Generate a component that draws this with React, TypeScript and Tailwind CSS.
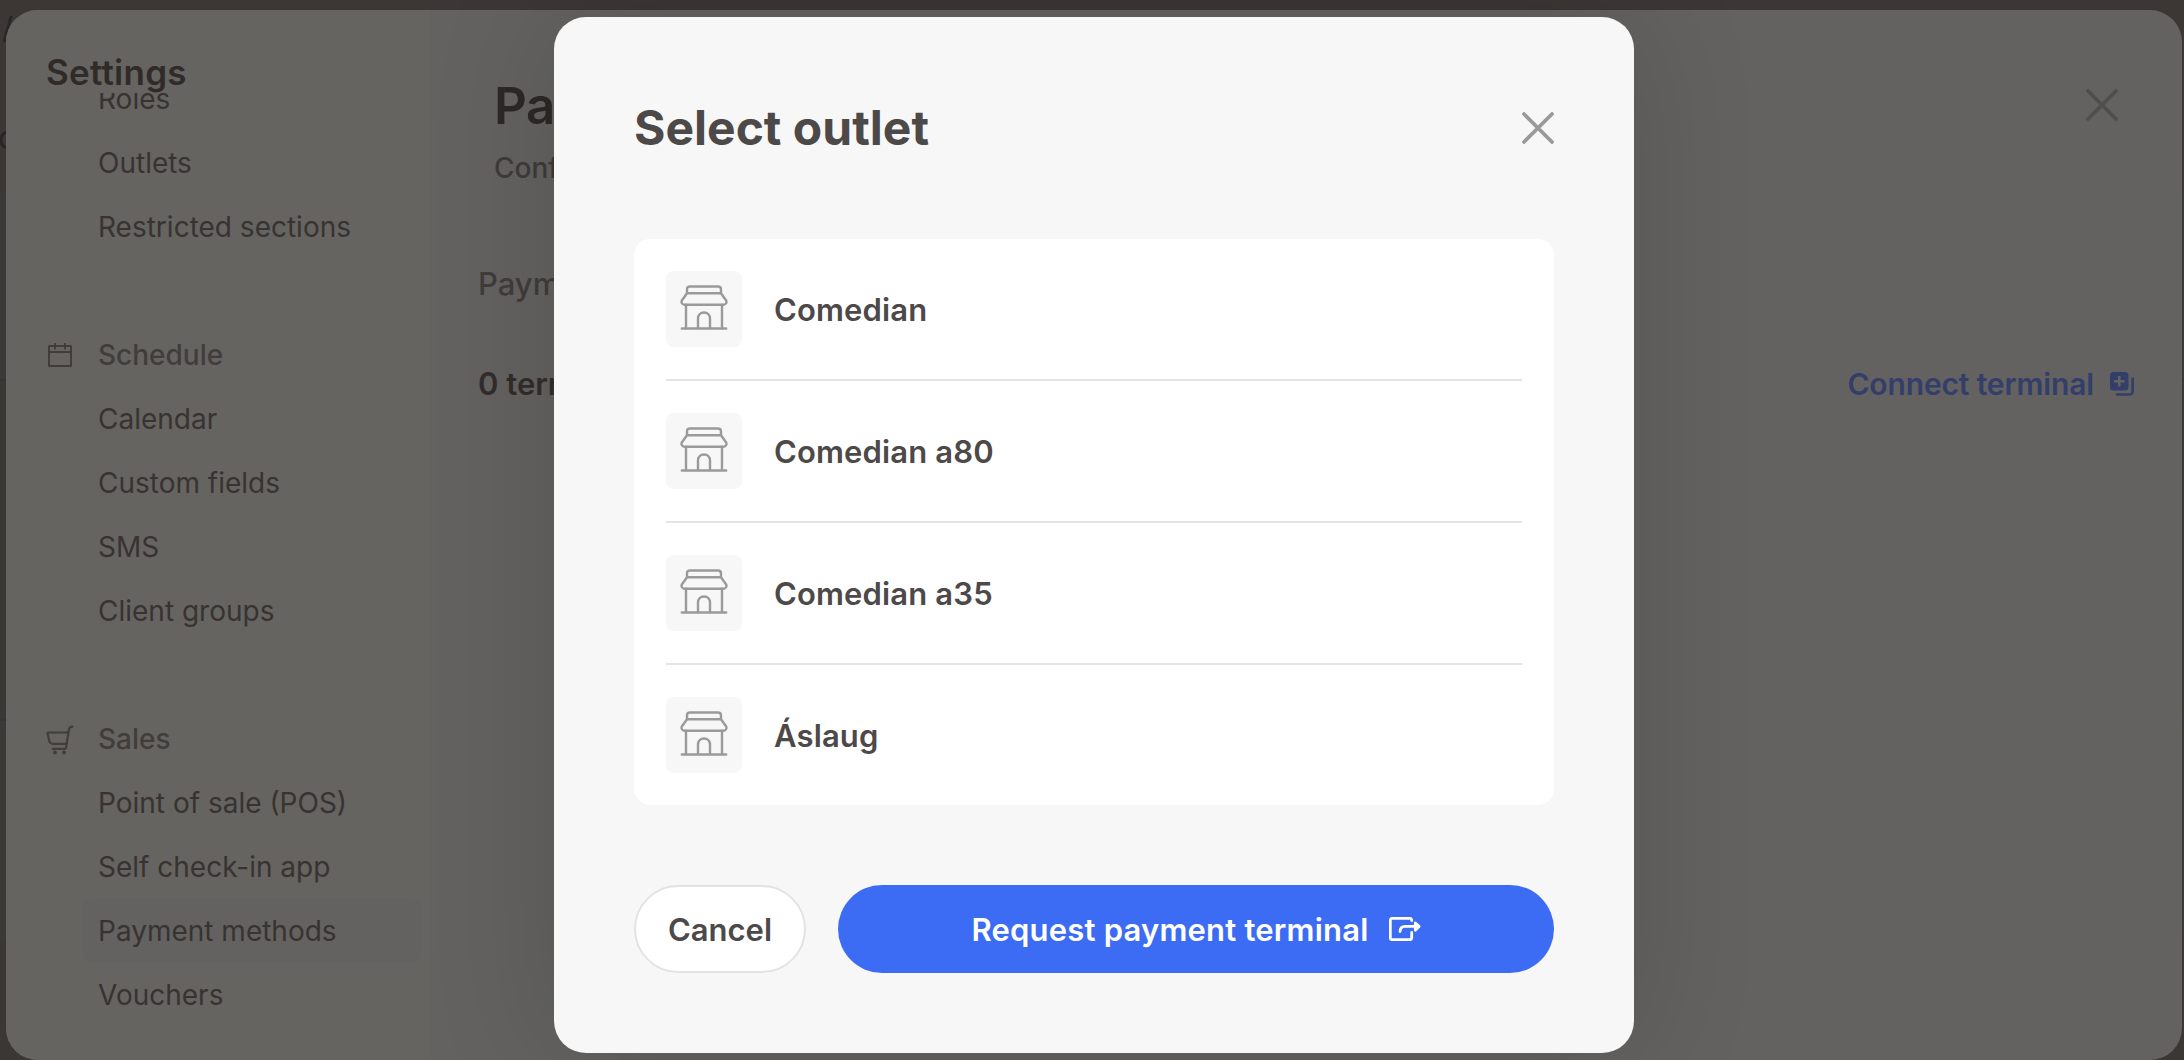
import { useState } from 'react';
import type { ReactNode } from 'react';

type NavSection = {
    title?: string;
    icon?: ReactNode;
    items: string[];
};

function CalendarIcon() {
    return (
        <svg width="28" height="28" viewBox="0 0 28 28" fill="none" stroke="currentColor" strokeWidth="2">
            <rect x="4" y="5" width="22" height="20" rx="0.5" />
            <path d="M4 11h22M10 2v6.5M20 2v6.5" />
        </svg>
    );
}

function CartIcon() {
    return (
        <svg
            width="30"
            height="32"
            viewBox="0 0 30 32"
            fill="none"
            stroke="currentColor"
            strokeWidth="2.2"
            strokeLinecap="round"
            strokeLinejoin="round"
        >
            <path d="M27.500 3.600c-2.200 0-3.200.8-3.600 3L21.100 24.500c-.2 1-.7 1.400-1.600 1.400H7.800" />
            <path d="M23.200 9.500H3.600c-.8 0-1.200.5-1 1.300l1.600 7c.6 2.200 1.400 3 3.400 3h14" />
            <circle cx="10" cy="29.500" r="1.900" fill="currentColor" stroke="none" />
            <circle cx="19" cy="29.500" r="1.900" fill="currentColor" stroke="none" />
        </svg>
    );
}

function StoreIcon() {
    return (
        <svg
            width="48"
            height="48"
            viewBox="0 0 48 48"
            fill="none"
            stroke="currentColor"
            strokeWidth="2.4"
            strokeLinecap="round"
            strokeLinejoin="round"
        >
            <path d="M7 8V4.500C7 2.500 8.200 1.500 10 1.500h28c1.800 0 3 1 3 3V8" />
            <path d="M7 8.200h34l5 7c1.200 2-.2 4.500-2.400 4.500H4.400C2.200 19.700.8 17.200 2 15.200z" />
            <path d="M6 19.700V43M42 19.700V43M1.800 43.500h44.400" />
            <path d="M18 43V33.500c0-3.600 2.600-6 6-6s6 2.400 6 6V43" />
        </svg>
    );
}

function CloseIcon() {
    return (
        <svg
            width="32"
            height="32"
            viewBox="0 0 32 32"
            fill="none"
            stroke="currentColor"
            strokeWidth="3.8"
            strokeLinecap="round"
        >
            <path d="M2 2l28 28M30 2L2 30" />
        </svg>
    );
}

function CopyPlusIcon() {
    return (
        <svg width="24" height="24" viewBox="0 0 24 24" fill="none">
            <path
                fill="currentColor"
                fillRule="evenodd"
                d="M3.500 0h11.500a3.500 3.500 0 0 1 3.500 3.500v11.500a3.500 3.500 0 0 1-3.500 3.500H3.500A3.500 3.500 0 0 1 0 15V3.500A3.500 3.500 0 0 1 3.500 0zM8 4v4H4v2.500h4v4h2.500v-4h4V8h-4V4z"
            />
            <path
                d="M22.600 6.500v13a3 3 0 0 1-3 3H7"
                stroke="currentColor"
                strokeWidth="2.600"
                strokeLinecap="round"
            />
        </svg>
    );
}

function RequestIcon() {
    return (
        <svg
            width="32"
            height="24"
            viewBox="0 0 32 24"
            fill="none"
            stroke="currentColor"
            strokeWidth="2.800"
            strokeLinecap="round"
            strokeLinejoin="round"
        >
            <path d="M22.700 3.600v-.3a2 2 0 0 0-2-2H3.300a2 2 0 0 0-2 2v17.400a2 2 0 0 0 2 2h17.400a2 2 0 0 0 2-2V15.500" />
            <path d="M11 14.500c.3-3.500 1.800-5.100 5-5.100h13" />
            <path d="M26.300 6l3.800 3.400-3.800 3.800z" fill="currentColor" />
        </svg>
    );
}

const sections: NavSection[] = [
    { items: ['Roles', 'Outlets', 'Restricted sections'] },
    { title: 'Schedule', icon: <CalendarIcon />, items: ['Calendar', 'Custom fields', 'SMS', 'Client groups'] },
    {
        title: 'Sales',
        icon: <CartIcon />,
        items: ['Point of sale (POS)', 'Self check-in app', 'Payment methods', 'Vouchers'],
    },
];

const outlets = ['Comedian', 'Comedian a80', 'Comedian a35', 'Áslaug'];

function PageBehind() {
    return (
        <div className="h-full overflow-hidden">
            <div className="h-[190px] bg-[#3c3735] text-[#2a2625] pt-2.5">
                <div className="text-[30px] leading-[36px] font-medium pl-0.5">/</div>
                <div className="mt-[74px] text-[32px] leading-[36px] -ml-0.5">c</div>
            </div>
            <div className="h-[189px] bg-[#3a3937]" />
            <div className="h-[340px] bg-[#3a3835] border-t-2 border-[#353432]" />
            <div className="h-[221px] bg-[#3a3936] border-t-2 border-[#30343e]" />
            <div className="h-[120px] bg-[#3b3735]" />
        </div>
    );
}

function Sidebar({ active, onSelect }: { active: string; onSelect: (item: string) => void }) {
    return (
        <aside className="w-[424px] shrink-0 flex flex-col bg-[#656461]">
            <div className="h-[83px] shrink-0 pl-10 pt-10">
                <h2 className="text-[35px] leading-[44px] font-semibold tracking-[0.25px] text-[#302b29]">Settings</h2>
            </div>
            <div className="flex-1 overflow-hidden">
                <nav className="-mt-[26px] flex flex-col gap-16">
                    {sections.map((section, i) => (
                        <div key={i} className="text-[28px] leading-[65px]">
                            {section.title && (
                                <div className="flex h-16 items-center text-[#413d3b]">
                                    <div className="w-[92px] pl-[39px]">{section.icon}</div>
                                    <div className="font-medium">{section.title}</div>
                                </div>
                            )}
                            {section.items.map(item => (
                                <button
                                    key={item}
                                    className={`ml-[76px] block h-16 w-[340px] rounded-xl pl-4 text-left text-[#383331] ${
                                        item === active ? 'bg-[#636260]' : ''
                                    }`}
                                    onClick={() => onSelect(item)}
                                >
                                    {item}
                                </button>
                            ))}
                        </div>
                    ))}
                </nav>
            </div>
        </aside>
    );
}

function SettingsPanel() {
    const [active, setActive] = useState('Payment methods');

    return (
        <div className="absolute top-2.5 right-0.5 bottom-0 left-1.5 flex overflow-hidden rounded-[32px] bg-[#636260]">
            <Sidebar active={active} onSelect={setActive} />
            <main className="flex-1 pl-[48px] pr-[48px]">
                <div className="flex justify-between pl-4 pr-4 pt-[64px]">
                    <div>
                        <h1 className="text-[51px] leading-[64px] font-semibold tracking-[-0.5px] text-[#2c2826]">
                            Payment methods
                        </h1>
                        <p className="mt-[10px] text-[28px] leading-[40px] font-medium text-[#3e3b39]">
                            Configure payment methods
                        </p>
                    </div>
                    <button className="mt-[15px] h-8 text-[#4f4e4c]">
                        <CloseIcon />
                    </button>
                </div>
                <p className="mt-[75px] text-[31px] leading-[42px] font-medium text-[#403c3a]">Payment terminals</p>
                <div className="mt-[58px] flex items-center justify-between font-semibold">
                    <p className="text-[31px] leading-[42px] text-[#322d2b]">0 terminals</p>
                    <button className="flex items-center gap-4 text-[30px] leading-[42px] tracking-[-0.15px] text-[#343e6b]">
                        Connect terminal
                        <CopyPlusIcon />
                    </button>
                </div>
            </main>
        </div>
    );
}

function OutletModal() {
    return (
        <div className="absolute top-[17px] left-[554px] w-[1080px] rounded-[32px] bg-[#f7f7f7] p-20 text-[#4d4948] shadow-[0_0_128px_rgba(0,0,0,0.14)]">
            <div className="flex h-[62px] items-center justify-between">
                <h2 className="text-[48px] font-bold">Select outlet</h2>
                <button className="text-[#9c9a99]">
                    <CloseIcon />
                </button>
            </div>
            <ul className="mt-20 rounded-2xl bg-white px-8">
                {outlets.map(name => (
                    <li
                        key={name}
                        className="flex items-center gap-8 border-b-2 border-[#e4e4e4] py-8 last:border-b-0"
                    >
                        <div className="flex h-[76px] w-[76px] items-start justify-center rounded-lg bg-[#f7f7f7] pt-[14px] text-[#9c9a99]">
                            <StoreIcon />
                        </div>
                        <span className="pt-0.5 text-[31px] font-semibold tracking-[0.15px]">{name}</span>
                    </li>
                ))}
            </ul>
            <div className="mt-20 flex h-[88px] gap-8 text-[31px] font-semibold">
                <button className="w-[172px] rounded-full border-2 border-[#e3e3e3] bg-white pt-0.5">Cancel</button>
                <button className="flex flex-1 items-center justify-center gap-5 rounded-full bg-[#3c6cf3] text-white">
                    <span className="pt-0.5 tracking-[0.2px]">Request payment terminal</span>
                    <RequestIcon />
                </button>
            </div>
        </div>
    );
}

export default function App() {
    return (
        <div className="relative h-[1060px] w-full overflow-hidden bg-[#3c3735] font-['Inter',sans-serif]">
            <PageBehind />
            <SettingsPanel />
            <OutletModal />
        </div>
    );
}
